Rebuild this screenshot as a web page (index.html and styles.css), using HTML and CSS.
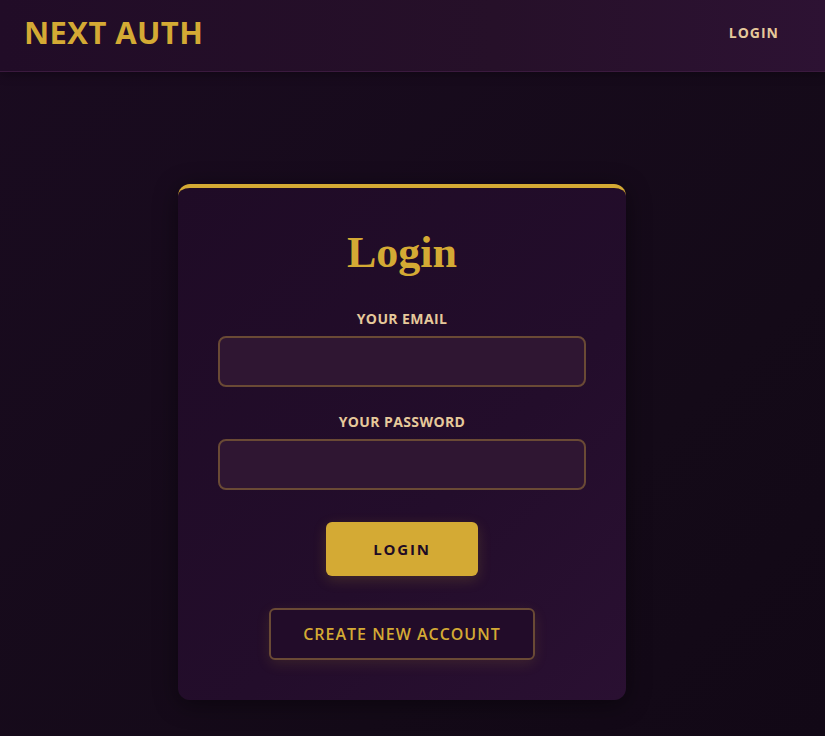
FILE: index.html
```html
<!DOCTYPE html>
<html lang="en">
<head>
    <meta charset="UTF-8">
    <meta name="viewport" content="width=device-width, initial-scale=1.0">
    <title>Next Auth</title>
    <link rel="stylesheet" href="styles.css">
</head>
<body>
    <header class="header">
        <a class="logo" href="#">NEXT AUTH</a>
        <nav class="nav">
            <a href="#">LOGIN</a>
        </nav>
    </header>
    <main class="main">
        <section class="auth">
            <h1>Login</h1>
            <form class="form">
                <div class="control">
                    <label for="email">Your Email</label>
                    <input type="email" id="email">
                </div>
                <div class="control">
                    <label for="password">Your Password</label>
                    <input type="password" id="password">
                </div>
                <div class="actions">
                    <button type="button" class="btn">Login</button>
                    <button type="button" class="toggle">Create new account</button>
                </div>
            </form>
        </section>
    </main>
</body>
</html>
```

FILE: styles.css
```css
* {
    box-sizing: border-box;
}
body {
    margin: 0;
    font-family: 'Open Sans', sans-serif;
    background: linear-gradient(135deg, #1a0b20, #140a18 70%, #120816);
    min-height: 100vh;
}
.header {
    height: 72px;
    display: flex;
    align-items: center;
    justify-content: space-between;
    padding: 0 46px 7px 24px;
    background: linear-gradient(90deg, #210c27, #261029 60%, #2d1233);
    border-bottom: 1px solid #3a1a3e;
    box-shadow: 0 2px 10px rgba(0, 0, 0, 0.35);
}
.logo {
    color: #d4aa34;
    font-size: 31px;
    font-weight: 700;
    letter-spacing: 0.4px;
    text-decoration: none;
}
.nav a {
    color: #e6c99b;
    font-size: 14px;
    font-weight: 700;
    letter-spacing: 1px;
    text-decoration: none;
}
.main {
    display: flex;
    justify-content: center;
    padding: 112px 21px 0 0;
}
.auth {
    width: 448px;
    padding: 0 40px 40px;
    border-top: 4px solid #d4aa34;
    border-radius: 12px;
    background: linear-gradient(135deg, #1f0b26, #230d2b 60%, #2a1032);
    box-shadow: 0 4px 24px rgba(0, 0, 0, 0.45);
    text-align: center;
}
.auth h1 {
    margin: 41px 0 0;
    font-family: 'Liberation Serif', serif;
    font-size: 44px;
    line-height: 48px;
    font-weight: 700;
    color: #d4aa34;
}
.control {
    margin-top: 32px;
}
.control + .control {
    margin-top: 25px;
}
.control label {
    display: block;
    font-size: 14px;
    line-height: 20px;
    font-weight: 700;
    letter-spacing: 0.4px;
    text-transform: uppercase;
    color: #e6c99b;
    margin-bottom: 7px;
}
.control input {
    display: block;
    width: 100%;
    height: 51px;
    border: 2px solid #6a4a35;
    border-radius: 8px;
    background: #2f1632;
    color: #e6c99b;
    font-size: 16px;
    padding: 0 12px;
}
.actions {
    display: flex;
    flex-direction: column;
    align-items: center;
    margin-top: 32px;
    gap: 32px;
}
.btn {
    width: 152px;
    height: 54px;
    border: none;
    border-radius: 6px;
    background: #d4aa34;
    color: #1e0b25;
    font-family: 'Open Sans', sans-serif;
    font-size: 15px;
    font-weight: 700;
    letter-spacing: 1.8px;
    text-transform: uppercase;
    box-shadow: 0 4px 14px rgba(212, 170, 52, 0.18);
    cursor: pointer;
}
.toggle {
    width: 266px;
    height: 52px;
    border: 2px solid #6a4a35;
    border-radius: 6px;
    background: #220c29;
    color: #d4aa34;
    font-family: 'Open Sans', sans-serif;
    font-size: 16px;
    font-weight: 600;
    letter-spacing: 1px;
    text-transform: uppercase;
    box-shadow: 0 4px 14px rgba(212, 170, 52, 0.12);
    cursor: pointer;
}
```
